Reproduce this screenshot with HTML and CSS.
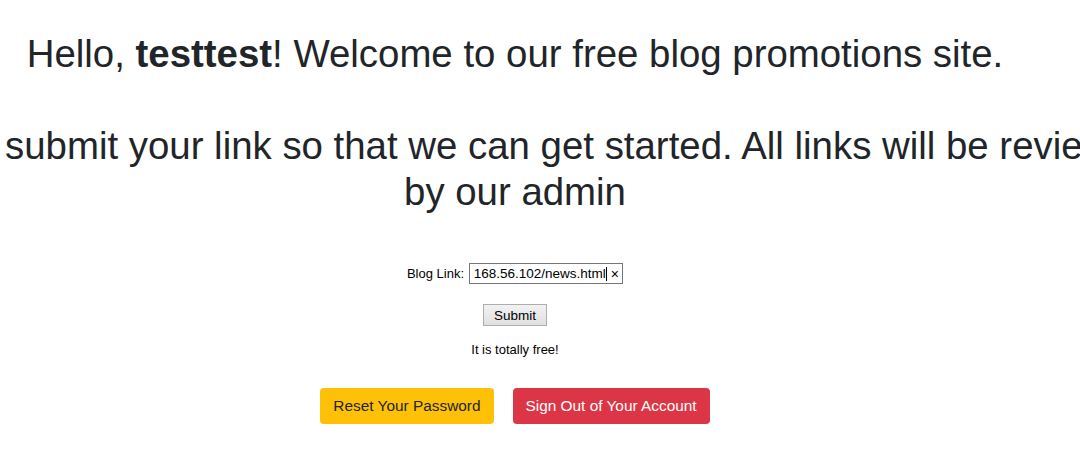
FILE: index.html
```html
<!DOCTYPE html>
<html lang="en">
  <head>
    <meta charset="UTF-8" />
    <meta name="viewport" content="width=device-width, initial-scale=1.0" />
    <title>Blog Promotions</title>
    <link rel="stylesheet" href="styles.css">
  </head>
  <body>
    <div class="page">
      <h1 class="title">Hello, <b>testtest</b>! Welcome to our free blog promotions site.</h1>
      <h2 class="title title-sub">Please submit your link so that we can get started. All links will be reviewed by our admin</h2>

      <form class="submit-form" onsubmit="return false;">
        <label class="link-row">
          Blog Link:
          <span class="field">
            <span class="field-clip">
              <span class="field-text">http://192.168.56.102/news.html</span>
            </span>
            <span class="caret"></span>
            <span class="clear">&times;</span>
          </span>
        </label>
        <button type="submit" class="submit-btn">Submit</button>
        <p class="note">It is totally free!</p>
      </form>

      <div class="actions">
        <a href="#" class="btn btn-warning">Reset Your Password</a>
        <a href="#" class="btn btn-danger">Sign Out of Your Account</a>
      </div>
    </div>
  </body>
</html>
```

FILE: styles.css
```css
body {
  margin: 0;
  font-family: "Liberation Sans", Arial, sans-serif;
  color: #212529;
  background-color: #fff;
  overflow: hidden;
}

.page {
  width: 1300px;
  margin-left: -135px;
  text-align: center;
}

.title {
  font-size: 38.4px;
  font-weight: normal;
  line-height: 1.2;
  margin: 31px 0 0 0;
}

.title b {
  font-weight: bold;
}

.title-sub {
  margin-top: 46px;
}

.submit-form {
  display: flex;
  flex-direction: column;
  align-items: center;
  margin-top: 48px;
  font-size: 13px;
  color: #000;
}

.link-row {
  display: flex;
  align-items: center;
  gap: 5px;
}

/* search box, scrolled to the end of its value */
.field {
  display: flex;
  align-items: center;
  width: 146px;
  height: 19px;
  padding: 0 2px 0 4px;
  border: 1px solid #767676;
}

.field-clip {
  flex: 1;
  display: flex;
  justify-content: flex-end;
  overflow: hidden;
}

.field-text {
  flex-shrink: 0;
  white-space: nowrap;
  font-size: 13.5px;
}

.caret {
  flex-shrink: 0;
  width: 1px;
  height: 14px;
  background-color: #000;
}

.clear {
  flex-shrink: 0;
  margin-left: 4px;
  padding-right: 1px;
  font-size: 14px;
}

.submit-btn {
  margin-top: 20px;
  width: 64px;
  height: 22px;
  padding: 0;
  font-family: inherit;
  font-size: 13.5px;
  color: #000;
  background: linear-gradient(#f2f2f2, #e0e0e0);
  border: 1px solid #adadad;
}

.note {
  margin: 16px 0 0 0;
  line-height: 15px;
}

.actions {
  display: flex;
  justify-content: center;
  gap: 19px;
  margin-top: 31px;
}

.btn {
  display: inline-block;
  padding: 0 13px;
  height: 36px;
  line-height: 36px;
  font-size: 15.4px;
  border-radius: 4px;
  text-decoration: none;
}

.btn-warning {
  background-color: #ffc107;
  color: #212529;
}

.btn-danger {
  background-color: #dc3545;
  color: #fff;
}
```
